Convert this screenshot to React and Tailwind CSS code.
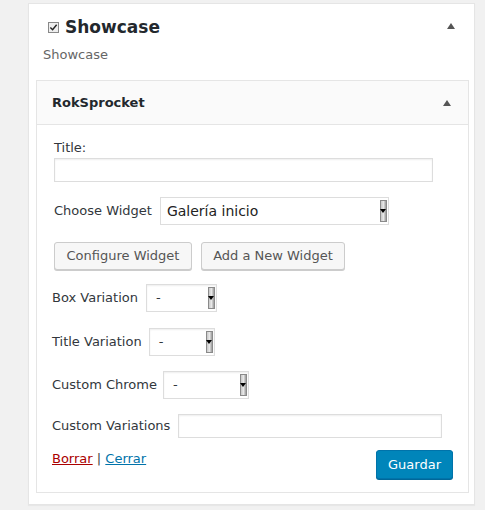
import React from "react";

function SelectBox({ value, width }) {
  return (
    <div className={`relative h-[28px] ${width} border border-[#dddddd] bg-white flex items-center shadow-[inset_0_1px_2px_rgba(0,0,0,0.07)]`}>
      <span className="pl-[9px] text-[13px] text-[#32373c]">{value}</span>
      <div className="absolute right-[1px] top-[2px] bottom-[2px] w-[7px] bg-gradient-to-r from-[#c8c8c8] via-[#e8e8e8] to-[#9a9a9a] border border-[#8a8a8a] flex items-center justify-center">
        <span className="block w-0 h-0 border-l-[3px] border-r-[3px] border-t-[4px] border-l-transparent border-r-transparent border-t-black" />
      </div>
    </div>
  );
}

function Arrow() {
  return <span className="block w-0 h-0 border-l-[4px] border-r-[4px] border-b-[6px] border-l-transparent border-r-transparent border-b-[#555]" />;
}

export default function App() {
  return (
    <div className="w-[485px] h-[510px] bg-[#f1f1f1] pt-[3px] pl-[28px] font-['DejaVu_Sans',sans-serif] text-[13px] text-[#444]">
      <div className="w-[447px] h-[502px] bg-white border border-[#e5e5e5] shadow-[0_1px_1px_rgba(0,0,0,0.04)]">
        {/* outer header */}
        <div className="flex items-center justify-between h-[42px] pl-[19px] pr-[19px] pt-[1px]">
          <div className="flex items-center gap-[6px] mt-[4px]">
            <span className="w-[11px] h-[11px] border border-[#888] bg-[#eee] flex items-center justify-center">
              <svg viewBox="0 0 10 10" className="w-[9px] h-[9px]">
                <path d="M1.5 5 L4 7.5 L8.5 2" fill="none" stroke="#222" strokeWidth="1.6" />
              </svg>
            </span>
            <span className="text-[17px] font-bold text-[#23282d]">Showcase</span>
          </div>
          <Arrow />
        </div>
        <div className="pl-[14px] text-[13px] text-[#666] leading-[18px]">Showcase</div>

        {/* inner widget */}
        <div className="ml-[7px] mt-[16px] w-[433px] h-[413px] border border-[#e5e5e5] bg-white">
          <div className="h-[44px] bg-[#fafafa] border-b border-[#e5e5e5] flex items-center justify-between pl-[15px] pr-[17px]">
            <span className="font-bold text-[13px] text-[#23282d]">RokSprocket</span>
            <Arrow />
          </div>

          <div className="pl-[15px] pr-[15px]">
            <div className="pl-[2px] pt-[14px]">
              <div className="leading-[18px] text-[#32373c]">Title:</div>
              <input className="mt-[1px] w-[379px] h-[24px] border border-[#dddddd] shadow-[inset_0_1px_2px_rgba(0,0,0,0.07)] outline-none" />
            </div>

            <div className="pl-[2px] mt-[15px] flex items-center gap-[8px]">
              <span className="text-[#32373c]">Choose Widget</span>
              <div className="relative h-[28px] w-[229px] border border-[#dddddd] bg-white flex items-center">
                <span className="pl-[6px] text-[14px] text-[#222]">Galería inicio</span>
                <div className="absolute right-[1px] top-[2px] bottom-[2px] w-[7px] bg-gradient-to-r from-[#c8c8c8] via-[#e8e8e8] to-[#9a9a9a] border border-[#8a8a8a] flex items-center justify-center">
                  <span className="block w-0 h-0 border-l-[3px] border-r-[3px] border-t-[4px] border-l-transparent border-r-transparent border-t-black" />
                </div>
              </div>
            </div>

            <div className="pl-[2px] mt-[17px] flex gap-[9px]">
              <button className="h-[28px] w-[138px] bg-[#f7f7f7] border border-[#cccccc] rounded-[3px] shadow-[0_1px_0_#cccccc] text-[#555] text-[13px]">
                Configure Widget
              </button>
              <button className="h-[28px] w-[144px] bg-[#f7f7f7] border border-[#cccccc] rounded-[3px] shadow-[0_1px_0_#cccccc] text-[#555] text-[13px]">
                Add a New Widget
              </button>
            </div>

            <div className="mt-[14px] flex items-center gap-[8px]">
              <span className="text-[#32373c]">Box Variation</span>
              <SelectBox value="-" width="w-[71px]" />
            </div>

            <div className="mt-[16px] flex items-center gap-[7px]">
              <span className="text-[#32373c]">Title Variation</span>
              <SelectBox value="-" width="w-[66px]" />
            </div>

            <div className="mt-[15px] flex items-center gap-[6px]">
              <span className="text-[#32373c]">Custom Chrome</span>
              <SelectBox value="-" width="w-[86px]" />
            </div>

            <div className="mt-[15px] flex items-center gap-[8px]">
              <span className="text-[#32373c]">Custom Variations</span>
              <input className="w-[264px] h-[24px] border border-[#dddddd] shadow-[inset_0_1px_2px_rgba(0,0,0,0.07)] outline-none" />
            </div>

            <div className="mt-[12px] flex justify-between items-start">
              <div className="leading-[18px]">
                <a className="text-[#a00] underline">Borrar</a>
                <span className="text-[#444]"> | </span>
                <a className="text-[#0073aa] underline">Cerrar</a>
              </div>
              <button className="h-[29px] w-[77px] bg-[#0085ba] border border-[#0073aa] rounded-[3px] text-white text-[13px] shadow-[0_1px_0_#006799]">
                Guardar
              </button>
            </div>
          </div>
        </div>
      </div>
    </div>
  );
}
